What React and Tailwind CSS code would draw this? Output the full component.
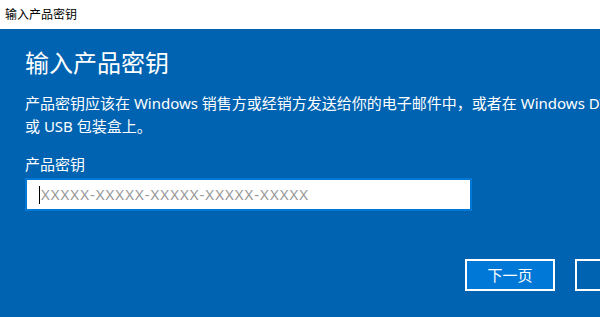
export default function App() {
  const font = { fontFamily: '"Noto Sans", "Noto Sans CJK SC", sans-serif' };
  return (
    <div className="w-[600px] h-[317px] overflow-hidden flex flex-col bg-[#0063b1] text-white" style={font}>
      <div className="h-[29px] shrink-0 bg-white text-black text-[12px] leading-[29px] pl-[5px]">输入产品密钥</div>
      <div className="flex flex-col pl-[25px] pt-[18px]">
        <div className="text-[24px] leading-[32px] whitespace-nowrap">输入产品密钥</div>
        <div className="mt-[13px] text-[15px] leading-[22.5px] whitespace-nowrap">
          产品密钥应该在 Windows 销售方或经销方发送给你的电子邮件中，或者在 Windows DVD
          <br />
          或 USB 包装盒上。
        </div>
        <div className="mt-[16px] text-[15px] leading-[22px]">产品密钥</div>
        <div className="mt-[3px] w-[447px] h-[33px] border-2 border-[#0078d7] bg-white flex items-center pl-[12px]">
          <span className="w-px h-[18px] bg-black mr-px"></span>
          <span className="text-[15px] text-[#999999] whitespace-nowrap tracking-[1px]">XXXXX-XXXXX-XXXXX-XXXXX-XXXXX</span>
        </div>
        <div className="mt-[48px] flex gap-[20px] pl-[440px]">
          <div className="shrink-0 w-[90px] h-[32px] border-2 border-white bg-[#0078d7] flex items-center justify-center text-[15px]">下一页</div>
          <div className="shrink-0 w-[90px] h-[32px] border-2 border-white flex items-center justify-center text-[15px]">取消</div>
        </div>
      </div>
    </div>
  );
}
